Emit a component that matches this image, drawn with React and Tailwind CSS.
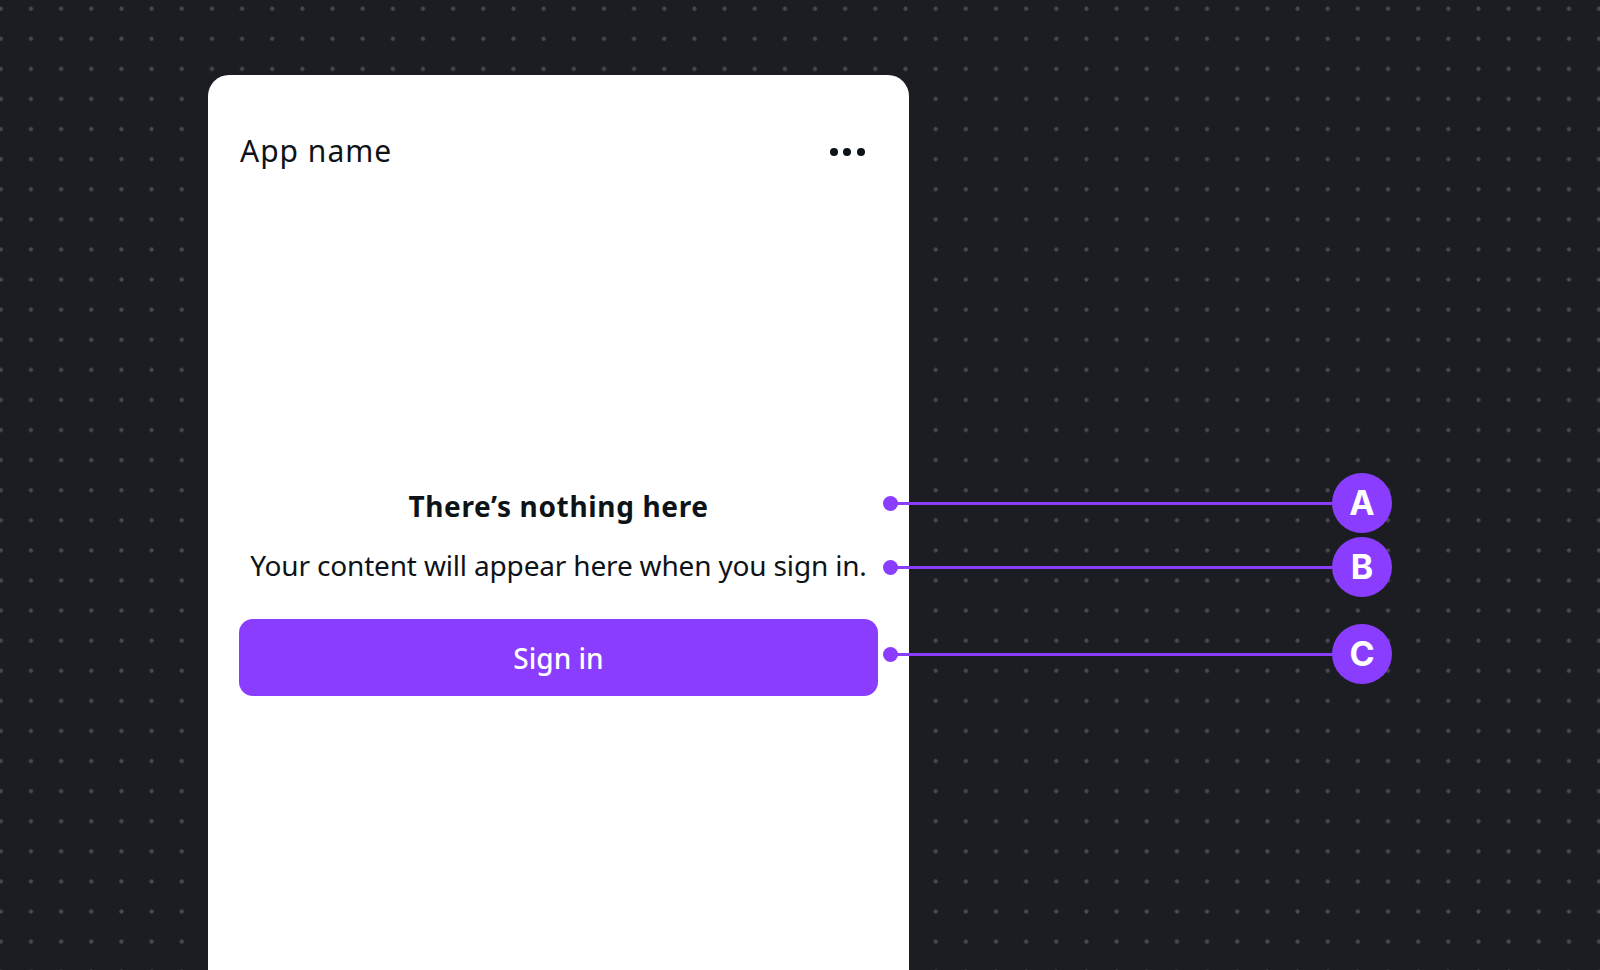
import React from "react";

const callouts = [
  { label: "A", top: "top-[473px]" },
  { label: "B", top: "top-[537px]" },
  { label: "C", top: "top-[624px]" },
];

const Callout = ({ label, top }) => (
  <div className={`absolute left-[883px] ${top} w-[509px] h-[60px] flex items-center`}>
    <div className="w-[15px] h-[15px] rounded-full bg-[#8b3dff] shrink-0" />
    <div className="flex-1 h-[3px] bg-[#8b3dff] -ml-[2px]" />
    <div className="w-[60px] h-[60px] rounded-full bg-[#8b3dff] shrink-0 flex items-center justify-center text-white text-[34px] font-bold font-['Inter',sans-serif] leading-none">
      {label}
    </div>
  </div>
);

const App = () => {
  return (
    <div className="relative h-[970px] overflow-hidden bg-[#1b1d22] bg-[radial-gradient(circle,#46494f_1.8px,transparent_2.4px)] bg-[size:30.17px_30.1px] bg-[position:15.9px_23.75px] font-['Noto_Sans',sans-serif]">
      {/* App panel */}
      <div className="ml-[208px] mt-[75px] w-[701px] h-[940px] bg-white rounded-[21px] flex flex-col px-[31px] pt-[56px] text-[#0e1318]">
        <div className="flex items-center justify-between h-[40px]">
          <h1 className="text-[30px] leading-[40px] ml-[1px] tracking-[1px]">App name</h1>
          <div className="flex items-center gap-[5.7px] mr-[13px] mt-[2px]">
            <span className="w-[8px] h-[8px] rounded-full bg-[#0e1318]" />
            <span className="w-[8px] h-[8px] rounded-full bg-[#0e1318]" />
            <span className="w-[8px] h-[8px] rounded-full bg-[#0e1318]" />
          </div>
        </div>

        <div className="mt-[317px] flex flex-col items-center text-center">
          <h2 className="text-[28px] leading-[36px] font-bold tracking-[0.65px]">There’s nothing here</h2>
          <p className="mt-[23px] text-[28px] leading-[36px] tracking-[-0.17px]">Your content will appear here when you sign in.</p>
        </div>

        <button className="mt-[36px] h-[77px] w-full rounded-[14px] bg-[#8b3dff] text-white text-[28px] font-medium">
          Sign in
        </button>
      </div>

      {callouts.map((c) => (
        <Callout key={c.label} {...c} />
      ))}
    </div>
  );
};

export default App;
